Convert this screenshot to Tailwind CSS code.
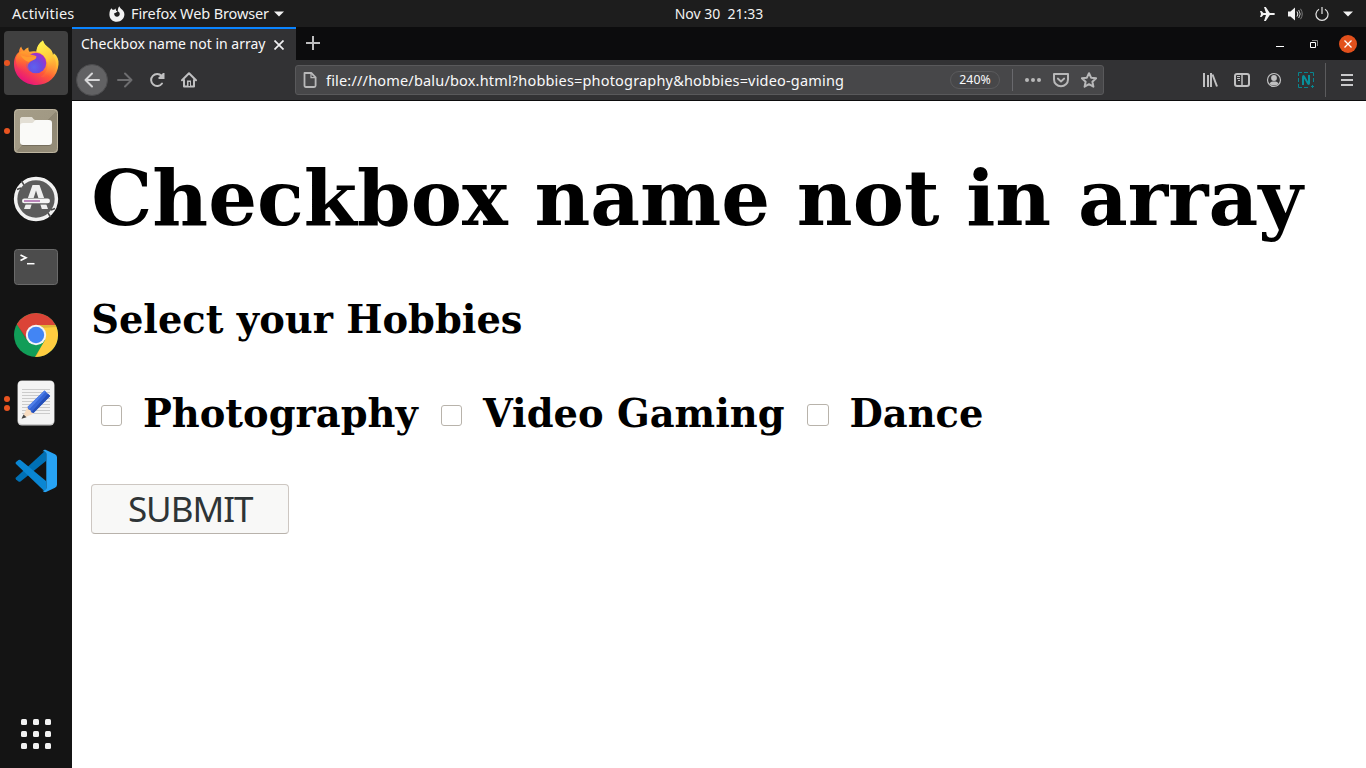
<!DOCTYPE html>
<html lang="en">
<head>
<meta charset="utf-8">
<title>Checkbox name not in array</title>
<script src="https://cdn.jsdelivr.net/npm/@tailwindcss/browser@4"></script>
</head>
<body class="h-screen overflow-hidden bg-[#141414] font-['Noto_Sans','Open_Sans',sans-serif]">
<div class="flex h-[768px] w-[1366px] flex-col">

  <!-- System bar -->
  <header class="grid h-[27px] shrink-0 grid-cols-3 items-center bg-[#1d1d1d] text-sm leading-[27px] text-[#f2f2f2]">
    <div class="flex items-center">
      <span class="ml-3 w-[97px] text-[14.5px] tracking-[0.2px]">Activities</span>
      <svg class="mr-[6px] h-4 w-4" viewBox="0 0 16 16"><path fill="#f2f2f2" d="M1 4.500 2.300 2.200l1.300 1.600h1.600L6.500 2.600l.7 2.200 1.300.7-1.700 1.300-1.600.4c-.3 1.900 1.100 3.500 2.800 3.500 1.700 0 2.900-1.400 2.700-3-.1-1.200-.9-2-1.900-2.400-.1-2 .5-3.900 1.500-5 .3 1 .8 1.700 1.700 2.400 1.700 1.300 3.400 2.900 3.400 5.600 0 4.300-3.300 7.500-7.500 7.500S.4 12.600.4 8.400C.4 6.900.6 5.600 1 4.500z"/></svg>
      <span class="w-[143px] whitespace-nowrap text-[14.5px] tracking-[-0.12px]">Firefox Web Browser</span>
      <svg class="h-[6px] w-[10px]" viewBox="0 0 10 6"><path fill="#f2f2f2" d="M0 .5h10L5 5.500z"/></svg>
    </div>
    <div class="pl-[72px] text-center text-[14px] leading-[26px] whitespace-pre">Nov 30  21:33</div>
    <div class="flex items-center justify-end">
      <svg class="mr-[13px] h-[14px] w-[15px]" viewBox="0 0 15 14"><path fill="#f2f2f2" d="M0 4h1.500L3.500 6H6L4 0h1.800L9.800 6H13c1 0 2 .4 2 1s-1 1-2 1H9.800l-4 6H4l2-6H3.500l-2 2H0l1-3z"/></svg>
      <svg class="mr-[12px] h-[14px] w-[15px]" viewBox="0 0 15 14"><path fill="#f2f2f2" d="M0 4.500h2.500L7 .5v13L2.500 9.500H0z"/><path fill="none" stroke="#f2f2f2" d="M9 4.500q1.800 2.500 0 5"/><path fill="none" stroke="#c5c5c5" d="M10.700 3q3 4 0 8"/><path fill="none" stroke="#7b7b7b" d="M12.500 1.800q3.500 5.200 0 10.400"/></svg>
      <svg class="mr-[14px] h-[14px] w-[14px]" viewBox="0 0 14 14"><path fill="none" stroke="#e4e4e4" stroke-width="1.200" d="M4 2.200a6 6 0 1 0 6 0M7 0v7"/></svg>
      <svg class="mr-[13px] h-[6px] w-[10px]" viewBox="0 0 10 6"><path fill="#f2f2f2" d="M0 .5h10L5 5.500z"/></svg>
    </div>
  </header>

  <div class="flex min-h-0 flex-1">
    <!-- Dock -->
    <nav class="flex w-[72px] shrink-0 flex-col items-center gap-1 bg-[#141414] pt-1">
      <div class="relative flex h-16 w-16 items-center justify-center rounded bg-[#404040]">
        <i class="absolute left-0 h-[6px] w-[6px] rounded-full bg-[#e95420]"></i>
        <svg class="h-[48px] w-[48px]" viewBox="0 0 48 48">
          <defs>
            <linearGradient id="ff" x1=".8" y1=".1" x2=".25" y2=".95"><stop offset="0" stop-color="#fff44f"/><stop offset=".3" stop-color="#ffb833"/><stop offset=".6" stop-color="#ff5a36"/><stop offset="1" stop-color="#e8127d"/></linearGradient>
            <linearGradient id="fy" x1=".3" y1="0" x2=".6" y2="1"><stop offset="0" stop-color="#fff64f"/><stop offset=".55" stop-color="#ffc83a"/><stop offset="1" stop-color="#ff6a36" stop-opacity="0"/></linearGradient>
            <linearGradient id="fl" x1=".5" y1="0" x2=".3" y2="1"><stop offset="0" stop-color="#ffa52c"/><stop offset=".5" stop-color="#ff6b34"/><stop offset="1" stop-color="#ff3f50" stop-opacity="0"/></linearGradient>
            <radialGradient id="fp" cx=".4" cy=".7" r=".7"><stop offset="0" stop-color="#5d62ef"/><stop offset=".5" stop-color="#6a4be0"/><stop offset="1" stop-color="#a62ec9"/></radialGradient>
          </defs>
          <path fill="url(#ff)" d="M2 25c0-6 2-9.500 5-12 .1-2 .8-4 2.200-5.500.4 2 1.400 3.300 2.800 4.300 1-1.600 2.500-2.700 4.500-3.300-.3 1.800 0 3 .9 4.200 2.500-.7 4.500-.7 7-.1.400-4.500 2.500-8.500 6.500-11.100 1 3.500 3.500 5.500 6.800 8.300 2.300 2 2.900 3.800 3 6.300.6-.3 1-1 1.200-1.800C45.500 17 47 21 46.500 25.500 45.500 37.500 36.500 46 24.500 46 12 46 2 37 2 25z"/>
          <path fill="url(#fy)" d="M24.400 12.600c.4-4.500 2.500-8.500 6.500-11.100 1 3.500 3.500 5.500 6.800 8.300 2.300 2 2.900 3.800 3 6.300 4 6 5 13 0 19-5 5-12 3-12 3 8-5 9-14 4-20-2-3-5-4.500-8.300-5.500z"/>
          <circle cx="24" cy="24" r="10.300" fill="url(#fp)"/>
          <path fill="url(#fl)" d="M4 19c1-3 2-5 5.200-6.500 2.300-.5 5 .3 7 2.500 2.600.4 6 1.500 8.200 2.200 0 1.800-1.200 2.900-2.400 3.500-3 1.300-5 2.300-5.800 4.800-.5 2 .3 4.300 1.900 6C12 35 3 31 4 19z"/>
          <path fill="#ff9b2f" d="M8.500 16 15 18c2.600.2 6-.2 9.400.5-1.400 2.500-5 2.500-7.400 4.500-3-.7-6.500-3-8.500-7z"/>
        </svg>
      </div>
      <div class="relative flex h-16 w-16 items-center justify-center">
        <i class="absolute left-0 h-[6px] w-[6px] rounded-full bg-[#e95420]"></i>
        <svg class="h-[48px] w-[48px]" viewBox="0 0 48 48"><defs><linearGradient id="fb" x1="0" y1="0" x2="1" y2="1"><stop offset="0" stop-color="#a59d88"/><stop offset=".5" stop-color="#a19984"/><stop offset=".5" stop-color="#8f8773"/><stop offset="1" stop-color="#958d79"/></linearGradient></defs>
          <rect x="2" y="2" width="44" height="44" rx="4" fill="#7b7464"/><rect x="2.500" y="2.500" width="43" height="43" rx="4" fill="url(#fb)" stroke="#bdb5a0" stroke-width="1"/><path fill="#e3dfd5" d="M8 13c0-2 1-3 3-3h8c2 0 2 3 4 3h14v8H8z"/><rect x="8.500" y="14" width="31" height="25" rx="3" fill="#756e5e"/><path fill="#e3dfd5" d="M8 13c0-2 1-3 3-3h8c2 0 2 3 4 3v6H8z"/><path fill="#fafaf8" d="M8 19c0-2 1-3 3-3h9c2 0 2-3 4-3h13c2 0 3 1 3 3v19c0 2-1 3-3 3H11c-2 0-3-1-3-3z"/></svg>
      </div>
      <div class="flex h-16 w-16 items-center justify-center">
        <svg class="h-[48px] w-[48px]" viewBox="0 0 48 48"><circle cx="24" cy="24" r="21" fill="#5c5c5c"/><circle cx="24" cy="24" r="20.400" fill="none" stroke="#f2f2f2" stroke-width="3.500"/><path stroke="#4c4c4c" stroke-width="1.500" d="m5 14.500 4-1.500M9.500 6l2.500 4M43 33.500l-4 1.500M38.500 42 36 38"/><path fill="#efefef" fill-rule="evenodd" d="M20.500 10h7L36 34h-6.200L24 15.500 18.200 34H12z"/><path stroke="#5c5c5c" stroke-width="6.600" d="M10 26.300h28"/><rect x="10" y="23.500" width="28" height="4.800" rx="2.400" fill="#f5f5f5"/><path stroke="#9a4a9a" stroke-width="1.300" d="M12 26h16"/></svg>
      </div>
      <div class="flex h-16 w-16 items-center justify-center">
        <svg class="h-[48px] w-[48px]" viewBox="0 0 48 48"><rect x="2.500" y="6.500" width="43" height="35" rx="3" fill="#4c4c4c" stroke="#6a6a6a"/><path fill="none" stroke="#fff" stroke-width="1.700" d="m8.500 12 5.500 2.800-5.500 2.800"/><path stroke="#fff" stroke-width="1.500" d="M15 20.700h7.500"/></svg>
      </div>
      <div class="flex h-16 w-16 items-center justify-center">
        <svg class="h-[48px] w-[48px]" viewBox="0 0 48 48"><circle cx="24" cy="24" r="22" fill="#119d58"/><path fill="#ffcd40" d="M24 14h19.600A22 22 0 0 1 24 46l-1-.1L33 29z"/><path fill="#db4437" d="M4.800 13.300A22 22 0 0 1 43.600 14H24L14.700 28.500z"/><path fill="#000" fill-opacity=".12" d="M24 14h19.600l.8 2L30 17zM5 13.500l9.700 16.500-.2-4zM33 29l-10 17 1 0 10-20z"/><circle cx="24" cy="24" r="10.200" fill="#f4f4f4"/><circle cx="24" cy="24" r="8.200" fill="#4285f4"/></svg>
      </div>
      <div class="relative flex h-16 w-16 items-center justify-center">
        <i class="absolute top-[25px] left-0 h-[6px] w-[6px] rounded-full bg-[#e95420]"></i>
        <i class="absolute top-[34px] left-0 h-[6px] w-[6px] rounded-full bg-[#e95420]"></i>
        <svg class="h-[48px] w-[48px]" viewBox="0 0 48 48"><rect x="5.500" y="1.500" width="37" height="45" rx="4.500" fill="#c9c9c9"/><rect x="6" y="2" width="36" height="43" rx="4" fill="#f3f3f3"/><path stroke="#cbcbcb" d="M10 10.500h28M10 13.500h28M10 16.500h28M10 19.500h28M10 22.500h28M10 25.500h28M10 28.500h28M10 31.500h28M10 34.500h28"/><path fill="#f8dcc0" d="m15.500 28 6.500 6.500-12 5z"/><path fill="#444" d="m11.500 35.500 3 2.700-5 1.600z"/><path fill="#3465d6" d="m15.500 28 17-16.500 5.700 5.500-16.700 17-2.300-.8-.7-2-2-.7z"/><path fill="#244fb8" d="m36 14.700 2.200 2.300-16.700 17-2-1z"/><path fill="#4f7fe8" d="m15.500 28 17-16.500 1.300 1.200L17.500 30z"/></svg>
      </div>
      <div class="flex h-16 w-16 items-center justify-center">
        <svg class="h-[48px] w-[48px]" viewBox="0 0 48 48"><path fill="#0070b5" d="M34 3v11L8.500 34.500q-1 .7-2 0l-2.500-2q-1-1 0-2z"/><path fill="#0a86d3" d="M34 45V34L8.500 13q-1-.7-2 0L4 15q-1 1 0 2l28 26.700z"/><path fill="#27a3f4" d="M34 45c-1.500.5-2.500-.3-3.500-1.500 1.700.8 3.800 0 3.800-2.500V7c0-2.500-2-3.300-3.800-2.500C31.500 3.300 32.500 2.500 34 3l9 4.300q2 1 2 3v27.400q0 2-2 3z"/></svg>
      </div>
      <div class="mt-auto mb-[19px] grid grid-cols-3 gap-[6px]">
        <i class="h-[6px] w-[6px] rounded-[1.500px] bg-[#f2f2f2]"></i><i class="h-[6px] w-[6px] rounded-[1.500px] bg-[#f2f2f2]"></i><i class="h-[6px] w-[6px] rounded-[1.500px] bg-[#f2f2f2]"></i>
        <i class="h-[6px] w-[6px] rounded-[1.500px] bg-[#f2f2f2]"></i><i class="h-[6px] w-[6px] rounded-[1.500px] bg-[#f2f2f2]"></i><i class="h-[6px] w-[6px] rounded-[1.500px] bg-[#f2f2f2]"></i>
        <i class="h-[6px] w-[6px] rounded-[1.500px] bg-[#f2f2f2]"></i><i class="h-[6px] w-[6px] rounded-[1.500px] bg-[#f2f2f2]"></i><i class="h-[6px] w-[6px] rounded-[1.500px] bg-[#f2f2f2]"></i>
      </div>
    </nav>

    <!-- Browser window -->
    <section class="flex min-w-0 flex-1 flex-col">
      <div class="flex h-[33px] shrink-0 bg-[#0c0c0d]">
        <div class="flex w-[224px] items-center border-t-2 border-[#0a84ff] bg-[#323234] pl-[9px] text-[#f9f9fa]">
          <span class="w-[193px] pb-[2px] text-[14px] whitespace-nowrap">Checkbox name not in array</span>
          <svg class="h-[10px] w-[10px]" viewBox="0 0 10 10"><path stroke="#f0f0f2" stroke-width="1.700" d="m.5.500 9 9m0-9-9 9"/></svg>
        </div>
        <svg class="mt-[9px] ml-[10px] h-[14px] w-[14px]" viewBox="0 0 14 14"><path stroke="#bdbdbe" stroke-width="2" d="M0 7h14M7 0v14"/></svg>
        <div class="ml-auto flex items-center pr-[9px]">
          <i class="mt-[5px] mr-[26px] h-px w-2 bg-white"></i>
          <svg class="mr-[21px] h-2 w-2" viewBox="0 0 8 8"><path fill="none" stroke="#8a8a8a" d="M2 .5h5.500V6"/><path fill="none" stroke="#fff" d="M.5 2.500h5v5h-5z"/></svg>
          <div class="flex h-[18px] w-[18px] items-center justify-center rounded-full bg-[#e2501c]"><svg class="h-2 w-2" viewBox="0 0 8 8"><path stroke="#fff" stroke-width="1.300" d="m.5.500 7 7m0-7-7 7"/></svg></div>
        </div>
      </div>

      <div class="flex h-[41px] shrink-0 items-center border-b border-[#0c0c0d] bg-[#323234]">
        <div class="ml-1 flex h-8 w-8 items-center justify-center rounded-full border border-[#4c4c4e] bg-[#626264]"><svg class="h-4 w-4" viewBox="0 0 16 16"><path fill="none" stroke="#d8d8d9" stroke-width="2" stroke-linecap="round" stroke-linejoin="round" d="M15 8H1.500M8 1.500 1.500 8 8 14.500"/></svg></div>
        <svg class="ml-[9px] h-4 w-4" viewBox="0 0 16 16"><path fill="none" stroke="#6d6d6f" stroke-width="2" stroke-linecap="round" stroke-linejoin="round" d="M1 8h13.500M8 1.500 14.500 8 8 14.500"/></svg>
        <svg class="ml-4 h-4 w-4" viewBox="0 0 16 16"><path fill="none" stroke="#c0c0c1" stroke-width="2" stroke-linecap="round" d="M12.600 4A6 6 0 1 0 13 11.500"/><path fill="#c0c0c1" d="M15.500 1v6h-6V5.500L14 1z"/></svg>
        <svg class="ml-4 h-4 w-4" viewBox="0 0 16 16"><path fill="none" stroke="#c0c0c1" stroke-width="2" stroke-linecap="round" stroke-linejoin="round" d="M1 8.300 8 1.300l7 7M3 8v6.500h10V8"/><path fill="#c0c0c1" d="M6 8.500h4V14H6z"/><path fill="#323234" d="M7.500 10h1.500v4H7.500z"/></svg>

        <div class="ml-[98px] flex h-[30px] w-[809px] items-center rounded-[3px] border border-[#59595b] bg-[#474749] text-[#f9f9fa]">
          <svg class="ml-[6px] h-4 w-4" viewBox="0 0 16 16"><path fill="none" stroke="#b8b8b9" stroke-width="1.800" stroke-linejoin="round" d="M2.500 1h6.800L13.600 5.300V13.500q0 1.500-1.500 1.500H4q-1.500 0-1.500-1.500z"/><path fill="none" stroke="#b8b8b9" stroke-width="1.200" d="M9 1v4.700h4.500"/></svg>
          <span class="ml-[8px] w-[624px] pt-[2px] text-[14.5px] tracking-[0.18px] whitespace-nowrap">file:///home/balu/box.html?hobbies=photography&amp;hobbies=video-gaming</span>
          <span class="flex h-[18px] w-[50px] items-center justify-center rounded-full border border-[#5a5a5c] pt-px text-[12.3px]">240%</span>
          <i class="ml-3 h-[22px] w-px bg-[#69696d]"></i>
          <svg class="ml-[12px] h-4 w-4" viewBox="0 0 16 16"><g fill="#b8b8b9"><circle cx="2" cy="8" r="2"/><circle cx="8" cy="8" r="2"/><circle cx="14" cy="8" r="2"/></g></svg>
          <svg class="ml-3 h-4 w-4" viewBox="0 0 16 16"><path fill="none" stroke="#b8b8b9" stroke-width="2" stroke-linejoin="round" d="M1 2h14v5.500a7 6.800 0 0 1-14 0z"/><path fill="none" stroke="#b8b8b9" stroke-width="1.800" stroke-linecap="round" stroke-linejoin="round" d="M4.800 6.500 8 9.500l3.200-3"/></svg>
          <svg class="ml-3 h-4 w-4" viewBox="0 0 16 16"><path fill="none" stroke="#b8b8b9" stroke-width="2" stroke-linejoin="round" d="m8 1.200 2.100 4.500 5 .6-3.700 3.400 1 5L8 12.200l-4.400 2.500 1-5L.900 6.300l5-.6z"/></svg>
        </div>

        <div class="ml-auto flex h-full items-center pr-[13px]">
          <svg class="mr-4 h-4 w-4" viewBox="0 0 16 16"><path stroke="#c0c0c1" stroke-width="2" d="M2 1v14M6 3v12M9 1v14M10.500 2.500l4.500 12"/></svg>
          <svg class="mr-4 h-4 w-4" viewBox="0 0 16 16"><rect x="1" y="2" width="14" height="12" rx="2" fill="none" stroke="#c0c0c1" stroke-width="2"/><path stroke="#c0c0c1" stroke-width="1.500" d="M8 2v12"/><path stroke="#c0c0c1" d="M3 4.500h3M3 6.500h3M4 8.500h2"/></svg>
          <svg class="mr-4 h-4 w-4" viewBox="0 0 16 16"><circle cx="8" cy="8" r="6.500" fill="none" stroke="#c0c0c1" stroke-width="1.200"/><circle cx="8" cy="6" r="2.900" fill="#c0c0c1"/><path fill="#c0c0c1" d="M3.500 12c.5-2 2-2.500 4.500-2.500s4 .5 4.500 2.500q-4.500 3-9 0z"/></svg>
          <svg class="mr-[11px] h-4 w-4" viewBox="0 0 16 16"><path fill="none" stroke="#08858f" d="M.5 4V.5H4M6 .5h4M12 .5h3.500V4M15.500 6v4M.5 6v4M.5 12v3.500H4M6 15.500h4M13 14.500h3M14.500 13v3"/><path fill="none" stroke="#08909b" stroke-width="2" d="M5 13V5q0-1.500 1-.5l4 7q1 1 1-.5V3"/></svg>
          <i class="mr-[15px] h-[34px] w-px bg-[#5b5b5d]"></i>
          <svg class="h-3 w-3" viewBox="0 0 12 12"><path stroke="#c9c9ca" stroke-width="2" d="M0 1h12M0 6h12M0 11h12"/></svg>
        </div>
      </div>

      <!-- Page -->
      <main class="min-h-0 flex-1 bg-white px-[19.2px] pt-[52px] font-['DejaVu_Serif',serif] font-bold text-black">
        <h1 class="h-[90px] text-[76.8px] leading-[90px] whitespace-nowrap">Checkbox name not in array</h1>
        <h4 class="mt-[54px] h-[45px] text-[38.4px] leading-[45px]">Select your Hobbies</h4>
        <form>
          <div class="mt-[49px] flex h-[45px] items-center text-[38.4px] leading-[45px] whitespace-nowrap">
            <input type="checkbox" aria-label="Photography" class="mt-[3px] ml-[9.800px] h-[21px] w-[21px] appearance-none rounded-[3px] border border-[#b8b3ab] bg-white">
            <span class="ml-[21px] w-[277px]">Photography</span>
            <input type="checkbox" aria-label="Video Gaming" class="mt-[3px] ml-[21px] h-[21px] w-[21px] appearance-none rounded-[3px] border border-[#b8b3ab] bg-white">
            <span class="ml-[21px] w-[303px]">Video Gaming</span>
            <input type="checkbox" aria-label="Dance" class="mt-[3px] ml-[21px] h-[22px] w-[22px] appearance-none rounded-[3px] border border-[#b8b3ab] bg-white">
            <span class="ml-[20.500px]">Dance</span>
          </div>
          <button type="button" class="mt-[48px] block h-[50px] w-[198px] rounded-[4px] border border-[#cdc7c2] border-b-[#b8b2ab] bg-[#f8f8f7] font-['Noto_Sans',sans-serif] text-[35px] leading-[48px] font-normal tracking-[-1px] text-[#2e3436]">SUBMIT</button>
        </form>
      </main>
    </section>
  </div>
</div>
</body>
</html>
